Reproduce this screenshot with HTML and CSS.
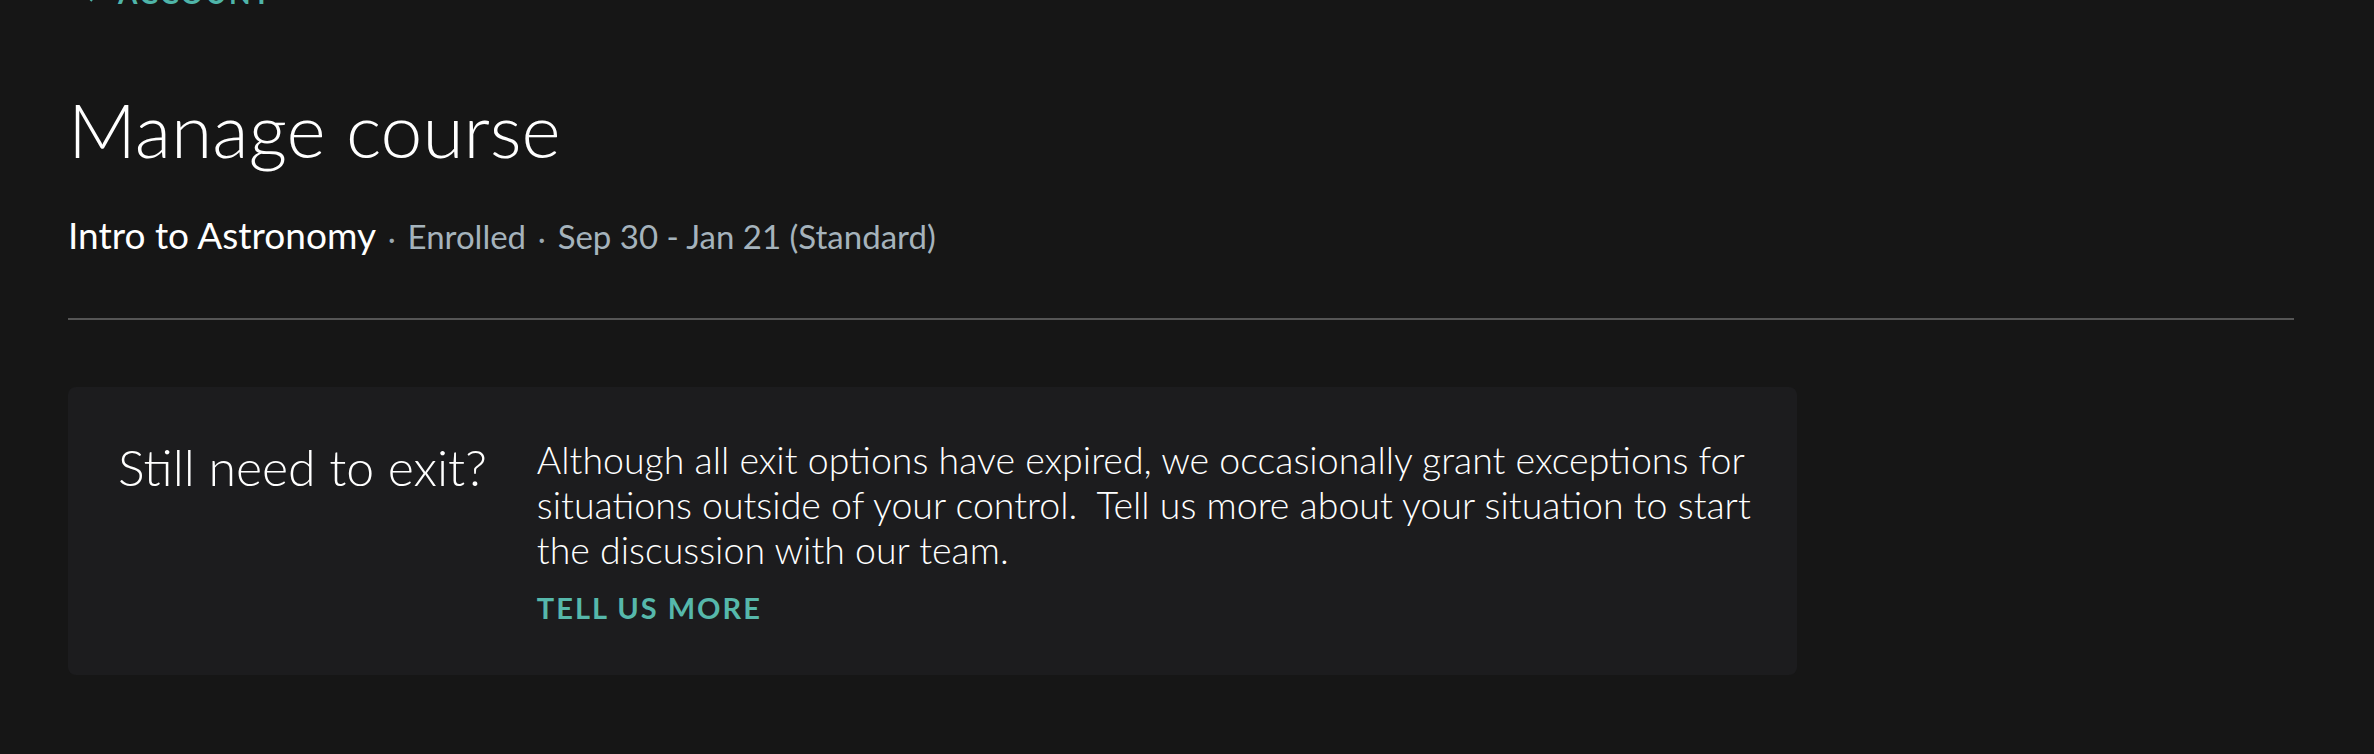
FILE: index.html
```html
<!DOCTYPE html>
<html lang="en">
<head>
<meta charset="utf-8">
<title>Manage course</title>
<link rel="stylesheet" href="styles.css">
</head>
<body>
<main class="page">
  <a class="back" href="#">
    <svg class="back-icon" viewBox="0 0 12 20" width="12" height="20"><path d="M10 2 L2 10 L10 18" fill="none" stroke="currentColor" stroke-width="2"/></svg>
    <span>ACCOUNT</span>
  </a>
  <h1 class="title">Manage course</h1>
  <p class="meta"><span class="course">Intro to Astronomy</span><span class="dot">·</span><span class="muted">Enrolled</span><span class="dot">·</span><span class="muted">Sep 30 - Jan 21 (Standard)</span></p>
  <hr class="divider">
  <section class="card">
    <h2 class="card-title">Still need to exit?</h2>
    <div class="card-body">
      <p class="card-text">Although all exit options have expired, we occasionally grant exceptions for situations outside of your control.&nbsp; Tell us more about your situation to start the discussion with our team.</p>
      <a class="cta" href="#">TELL US MORE</a>
    </div>
  </section>
</main>
</body>
</html>
```

FILE: styles.css
```css
html, body {
  margin: 0;
  padding: 0;
  background: #161616;
  height: 100%;
  overflow: hidden;
}
body {
  font-family: Lato, "Open Sans", sans-serif;
  color: #ffffff;
}
.page {
  padding: 0 80px 0 68px;
}
.back {
  display: flex;
  align-items: center;
  gap: 24px;
  margin-top: -22px;
  height: 30px;
  color: #4fb5a9;
  text-decoration: none;
  font-size: 28px;
  letter-spacing: 2.5px;
  font-weight: 700;
  padding-left: 14px;
}
.back-icon { color: #4fb5a9; }
.title {
  margin: 71px 0 0 0;
  font-weight: 300;
  font-size: 75px;
  line-height: 100px;
}
.meta {
  margin: 34px 0 0 0;
  font-size: 37px;
  line-height: 44px;
  display: flex;
  align-items: baseline;
}
.course { color: #ffffff; }
.dot { color: #9aa7b0; margin: 0 12px; font-size: 29px; }
.muted { color: #a5b3bc; font-size: 33px; }
.divider {
  margin: 58px 0 0 0;
  border: 0;
  height: 2px;
  background: #555555;
}
.card {
  margin-top: 67px;
  width: 1729px;
  box-sizing: border-box;
  background: #1c1c1e;
  border-radius: 8px;
  padding: 50px 40px 50px 50px;
  display: flex;
  gap: 50px;
}
.card-title {
  margin: 0;
  font-weight: 300;
  font-size: 50px;
  line-height: 60px;
  white-space: nowrap;
}
.card-body { flex: 1; }
.card-text {
  margin: 0;
  font-weight: 300;
  font-size: 37.5px;
  line-height: 45px;
}
.cta {
  display: inline-block;
  margin-top: 18px;
  color: #56b8ab;
  text-decoration: none;
  font-weight: 700;
  font-size: 29px;
  letter-spacing: 2px;
}
```
